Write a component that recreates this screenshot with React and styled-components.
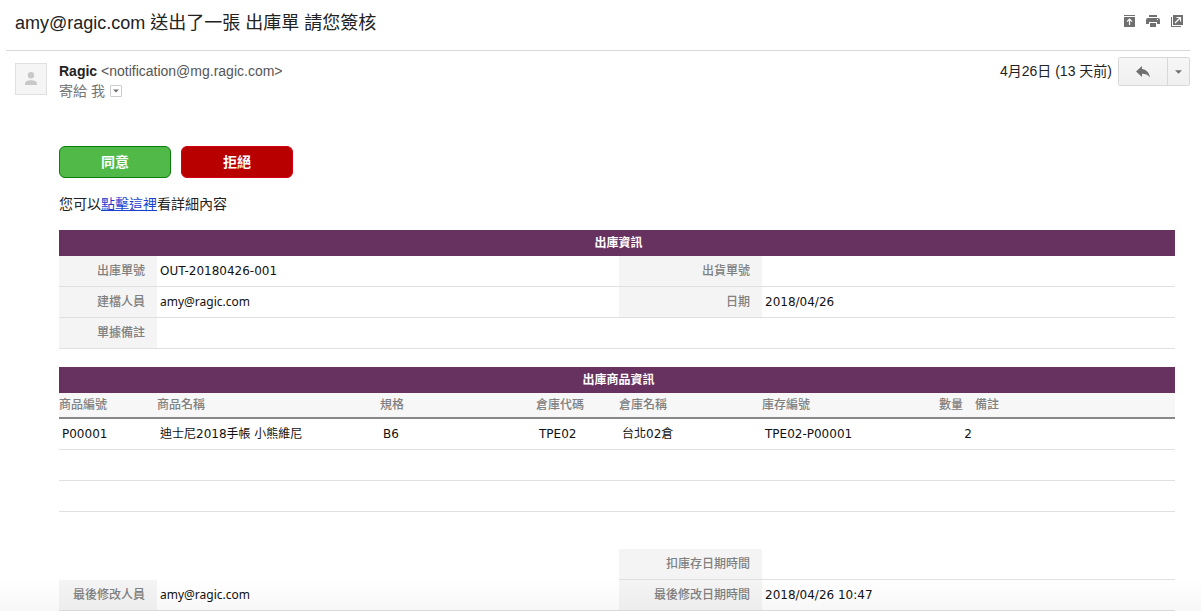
import React from "react";
import styled, { createGlobalStyle } from "styled-components";

const SANS = `"Liberation Sans", "Noto Sans CJK TC", sans-serif`;
const SHEET = `"DejaVu Sans", "Noto Sans CJK TC", sans-serif`;

const GlobalStyle = createGlobalStyle`
  *, *::before, *::after { box-sizing: border-box; }
  body { margin: 0; background: #fff; color: #222; font-family: ${SANS}; font-size: 14px; }
`;

const Page = styled.div`
  position: relative;
`;

const SubjectBar = styled.header`
  display: flex;
  align-items: center;
  justify-content: space-between;
  height: 51px;
  margin: 0 11px 0 6px;
  padding: 0 7px 4px 9px;
  border-bottom: 1px solid #d8d8d8;
`;

const Subject = styled.h1`
  margin: 0;
  font-size: 18px;
  line-height: 24px;
  font-weight: 400;
`;

const Tools = styled.div`
  display: flex;
  gap: 11px;
  padding-bottom: 4px;
`;

const ToolButton = styled.button`
  display: flex;
  padding: 0;
  border: 0;
  background: none;
  color: #707070;
`;

const MessageHead = styled.section`
  display: flex;
  align-items: flex-start;
  padding: 6px 11px 0 15px;
`;

const Avatar = styled.div`
  display: flex;
  align-items: center;
  justify-content: center;
  width: 32px;
  height: 32px;
  margin: 6px 12px 0 0;
  border: 1px solid #e0e0e0;
  background: #f5f5f5;
`;

const Sender = styled.div`
  flex: 1;
  padding-top: 4px;
  line-height: 20px;
  color: #555;
`;

const SenderName = styled.strong`
  color: #222;
`;

const Recipient = styled.div`
  display: flex;
  align-items: center;
  gap: 5px;
  color: #777;
`;

const DetailsButton = styled.button`
  display: flex;
  align-items: center;
  justify-content: center;
  width: 12px;
  height: 12px;
  padding: 0;
  border: 1px solid #ccc;
  border-radius: 1px;
  background: #fff;
`;

const SentDate = styled.time`
  padding: 4px 6px 0 0;
  line-height: 20px;
`;

const ReplyGroup = styled.div`
  display: flex;
  height: 29px;
  border: 1px solid #d8d8d8;
  border-radius: 2px;
`;

const ReplyButton = styled.button`
  display: flex;
  align-items: center;
  justify-content: center;
  width: ${(p) => (p.$narrow ? 22 : 48)}px;
  padding: 0;
  border: 0;
  border-left: ${(p) => (p.$narrow ? "1px solid #d8d8d8" : 0)};
  background: linear-gradient(#f6f6f6, #f0f0f0);
  color: #707070;
`;

const MessageBody = styled.main`
  padding: 45px 26px 0 59px;
`;

const Actions = styled.div`
  display: flex;
  gap: 10px;
`;

const ActionButton = styled.button`
  width: 112px;
  height: 32px;
  padding: 0;
  border: 1px solid ${(p) => (p.$approve ? "#0b7d0b" : "#d40012")};
  border-radius: 6px;
  background: ${(p) => (p.$approve ? "#50b948" : "#b90000")};
  color: #fff;
  font: 700 14px/20px ${SANS};
`;

const Hint = styled.p`
  margin: 16px 0;
  line-height: 20px;
`;

const DetailLink = styled.a`
  color: #1c3fd0;
`;

const Sheet = styled.table`
  width: 100%;
  margin-bottom: ${(p) => p.$gap || 0}px;
  table-layout: fixed;
  border-collapse: separate;
  border-spacing: 0;
  font: 12px/18px ${SHEET};
  color: #111;
`;

const SheetTitle = styled.caption`
  height: 26px;
  padding-left: 3px;
  background: #67325f;
  color: #fff;
  font-weight: 700;
  line-height: 26px;
`;

const Label = styled.th`
  height: 31px;
  padding: 0 12px 0 0;
  border-bottom: 1px solid #e0e0e0;
  background: #f4f4f4;
  color: #808080;
  font-weight: 500;
  text-align: right;
`;

const ColumnHead = styled.th`
  height: 26px;
  padding: 0 ${(p) => (p.$right ? 12 : 0)}px 0 0;
  border-bottom: 2px solid #888;
  background: #f7f7f7;
  color: #808080;
  font-weight: 500;
  text-align: ${(p) => (p.$right ? "right" : "left")};
`;

const Value = styled.td`
  height: 31px;
  padding: 0 3px;
  border-bottom: 1px solid #e0e0e0;
  text-align: ${(p) => (p.$right ? "right" : "left")};
`;

const Mail = styled.span`
  font-family: "Noto Sans", sans-serif;
`;

const BottomShade = styled.div`
  position: absolute;
  right: 0;
  bottom: 0;
  left: 0;
  height: 32px;
  background: linear-gradient(rgba(0, 0, 0, 0), rgba(0, 0, 0, 0.03));
  pointer-events: none;
`;

const Column = styled.col`
  width: ${(p) => (p.$width ? `${p.$width}px` : "auto")};
`;

const FormColumns = () => (
  <colgroup>
    <Column $width={98} />
    <Column $width={462} />
    <Column $width={143} />
    <Column />
  </colgroup>
);

const itemColumns = [
  { title: "商品編號", width: 98 },
  { title: "商品名稱", width: 223 },
  { title: "規格", width: 156 },
  { title: "倉庫代碼", width: 83 },
  { title: "倉庫名稱", width: 143 },
  { title: "庫存編號", width: 140 },
  { title: "數量", width: 73, right: true },
  { title: "備註" },
];

const itemRows = [
  ["P00001", "迪士尼2018手帳 小熊維尼", "B6", "TPE02", "台北02倉", "TPE02-P00001", "2", ""],
  ["", "", "", "", "", "", "", ""],
  ["", "", "", "", "", "", "", ""],
];

const Caret = ({ width = 7 }) => (
  <svg width={width} height="4" viewBox="0 0 8 4" aria-hidden="true">
    <path d="M0 0h8L4 4z" fill="#707070" />
  </svg>
);

export default function App() {
  return (
    <Page>
      <GlobalStyle />
      <SubjectBar>
        <Subject>amy@ragic.com 送出了一張 出庫單 請您簽核</Subject>
        <Tools>
          <ToolButton aria-label="全部收合">
            <svg width="11" height="12" viewBox="0 0 11 12" fill="currentColor">
              <path d="M0 0h11v1H0zM0 2h11v10H0z" />
              <path d="M5.500 10V4.500M3 6.700L5.500 4.200L8 6.700" fill="none" stroke="#fff" strokeWidth="1.2" />
            </svg>
          </ToolButton>
          <ToolButton aria-label="列印">
            <svg width="14" height="12" viewBox="0 0 14 12" fill="currentColor">
              <path d="M3 0h8v2H3zM2 3h10a2 2 0 0 1 2 2v4h-3V7H3v2H0V5a2 2 0 0 1 2-2zM4 8h6v4H4z" />
              <path d="M11 4h1v1h-1z" fill="#fff" />
            </svg>
          </ToolButton>
          <ToolButton aria-label="在新視窗中開啟">
            <svg width="12" height="12" viewBox="0 0 12 12" fill="currentColor">
              <path d="M2 0h10v10H2zM0 2h1v9h9v1H0z" />
              <path d="M4 8l5-5M5.500 2.500h4v4" fill="none" stroke="#fff" strokeWidth="1.2" />
            </svg>
          </ToolButton>
        </Tools>
      </SubjectBar>

      <MessageHead>
        <Avatar>
          <svg width="12" height="14" viewBox="0 0 12 14" fill="#c8c8c8" aria-hidden="true">
            <circle cx="6" cy="3.2" r="3.2" />
            <path d="M0 13v-1.500C0 9 4 8.300 6 8.300s6 .7 6 3.200V13z" />
          </svg>
        </Avatar>
        <Sender>
          <div>
            <SenderName>Ragic</SenderName> &lt;notification@mg.ragic.com&gt;
          </div>
          <Recipient>
            <span>寄給 我</span>
            <DetailsButton aria-label="顯示詳細資料">
              <Caret width={6} />
            </DetailsButton>
          </Recipient>
        </Sender>
        <SentDate>4月26日 (13 天前)</SentDate>
        <ReplyGroup>
          <ReplyButton aria-label="回覆">
            <svg width="14" height="12" viewBox="0 0 14 12" fill="currentColor">
              <path d="M6 0v3c4 .5 7 3 8 8.500-2-2.800-4.500-3.800-8-3.800v3.300L0 5.500z" />
            </svg>
          </ReplyButton>
          <ReplyButton $narrow aria-label="更多">
            <Caret />
          </ReplyButton>
        </ReplyGroup>
      </MessageHead>

      <MessageBody>
        <Actions>
          <ActionButton $approve>同意</ActionButton>
          <ActionButton>拒絕</ActionButton>
        </Actions>
        <Hint>
          您可以<DetailLink href="#detail">點擊這裡</DetailLink>看詳細內容
        </Hint>

        <Sheet $gap={18}>
          <SheetTitle>出庫資訊</SheetTitle>
          <FormColumns />
          <tbody>
            <tr>
              <Label scope="row">出庫單號</Label>
              <Value>OUT-20180426-001</Value>
              <Label scope="row">出貨單號</Label>
              <Value />
            </tr>
            <tr>
              <Label scope="row">建檔人員</Label>
              <Value><Mail>amy@ragic.com</Mail></Value>
              <Label scope="row">日期</Label>
              <Value>2018/04/26</Value>
            </tr>
            <tr>
              <Label scope="row">單據備註</Label>
              <Value colSpan={3} />
            </tr>
          </tbody>
        </Sheet>

        <Sheet $gap={37}>
          <SheetTitle>出庫商品資訊</SheetTitle>
          <colgroup>
            {itemColumns.map((c) => (
              <Column key={c.title} $width={c.width} />
            ))}
          </colgroup>
          <thead>
            <tr>
              {itemColumns.map((c) => (
                <ColumnHead key={c.title} scope="col" $right={c.right}>{c.title}</ColumnHead>
              ))}
            </tr>
          </thead>
          <tbody>
            {itemRows.map((row, i) => (
              <tr key={i}>
                {row.map((cell, j) => (
                  <Value key={j} $right={itemColumns[j].right}>{cell}</Value>
                ))}
              </tr>
            ))}
          </tbody>
        </Sheet>

        <Sheet>
          <FormColumns />
          <tbody>
            <tr>
              <td colSpan={2} />
              <Label scope="row">扣庫存日期時間</Label>
              <Value />
            </tr>
            <tr>
              <Label scope="row">最後修改人員</Label>
              <Value><Mail>amy@ragic.com</Mail></Value>
              <Label scope="row">最後修改日期時間</Label>
              <Value>2018/04/26 10:47</Value>
            </tr>
          </tbody>
        </Sheet>
      </MessageBody>
      <BottomShade />
    </Page>
  );
}
